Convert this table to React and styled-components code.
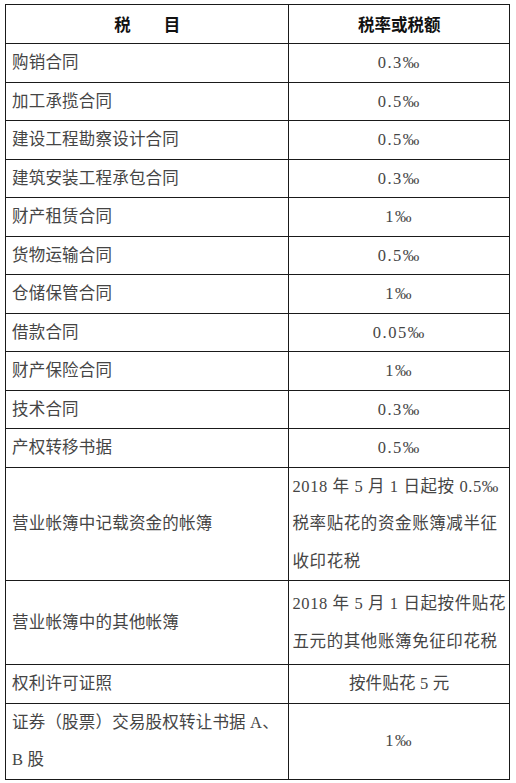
import React from "react";
import styled, { createGlobalStyle } from "styled-components";

const Global = createGlobalStyle`
  body {
    margin: 0;
    background: #fff;
  }
`;

const Page = styled.div`
  padding: 4px 0 0 5px;
  width: 516px;
  box-sizing: border-box;
`;

const Table = styled.table`
  width: 505px;
  border-collapse: collapse;
  border: 1.5px solid #1a1a1a;
  font-family: "Liberation Serif", "Noto Sans CJK SC", serif;
  font-size: 16.5px;
  color: #454545;
`;

const Head = styled.th`
  border: 1px solid #1a1a1a;
  height: 38px;
  padding: 0;
  font-family: "Noto Sans CJK SC", sans-serif;
  font-weight: 700;
  font-size: 16.5px;
  color: #111;
  text-align: center;
  width: ${(p) => (p.$wide ? "287px" : "auto")};
  white-space: pre;
`;

const Cell = styled.td`
  border: 1px solid #1a1a1a;
  line-height: 37.5px;
  padding: ${(p) => (p.$extra ? "4px" : "0")} ${(p) => (p.$rate ? "3px" : "6px")};
  text-align: ${(p) => (p.$center ? "center" : "left")};
  white-space: nowrap;
  letter-spacing: ${(p) => (p.$rate ? "0.6px" : p.$num ? "1.5px" : "0.2px")};
  vertical-align: middle;
`;

const rows = [
  ["购销合同", "0.3‰"],
  ["加工承揽合同", "0.5‰"],
  ["建设工程勘察设计合同", "0.5‰"],
  ["建筑安装工程承包合同", "0.3‰"],
  ["财产租赁合同", "1‰"],
  ["货物运输合同", "0.5‰"],
  ["仓储保管合同", "1‰"],
  ["借款合同", "0.05‰"],
  ["财产保险合同", "1‰"],
  ["技术合同", "0.3‰"],
  ["产权转移书据", "0.5‰"],
];

export default function App() {
  return (
    <Page>
      <Global />
      <Table>
        <thead>
          <tr>
            <Head $wide>{"税　　目"}</Head>
            <Head>税率或税额</Head>
          </tr>
        </thead>
        <tbody>
          {rows.map(([name, rate]) => (
            <tr key={name}>
              <Cell>{name}</Cell>
              <Cell $center $num>{rate}</Cell>
            </tr>
          ))}
          <tr>
            <Cell>营业帐簿中记载资金的帐簿</Cell>
            <Cell $rate>
              2018 年 5 月 1 日起按 0.5‰
              <br />
              税率贴花的资金账簿减半征
              <br />
              收印花税
            </Cell>
          </tr>
          <tr>
            <Cell $extra>营业帐簿中的其他帐簿</Cell>
            <Cell $rate $extra>
              2018 年 5 月 1 日起按件贴花
              <br />
              五元的其他账簿免征印花税
            </Cell>
          </tr>
          <tr>
            <Cell>权利许可证照</Cell>
            <Cell $center>按件贴花 5 元</Cell>
          </tr>
          <tr>
            <Cell>
              证券（股票）交易股权转让书据 A、
              <br />B 股
            </Cell>
            <Cell $center $num>1‰</Cell>
          </tr>
        </tbody>
      </Table>
    </Page>
  );
}
